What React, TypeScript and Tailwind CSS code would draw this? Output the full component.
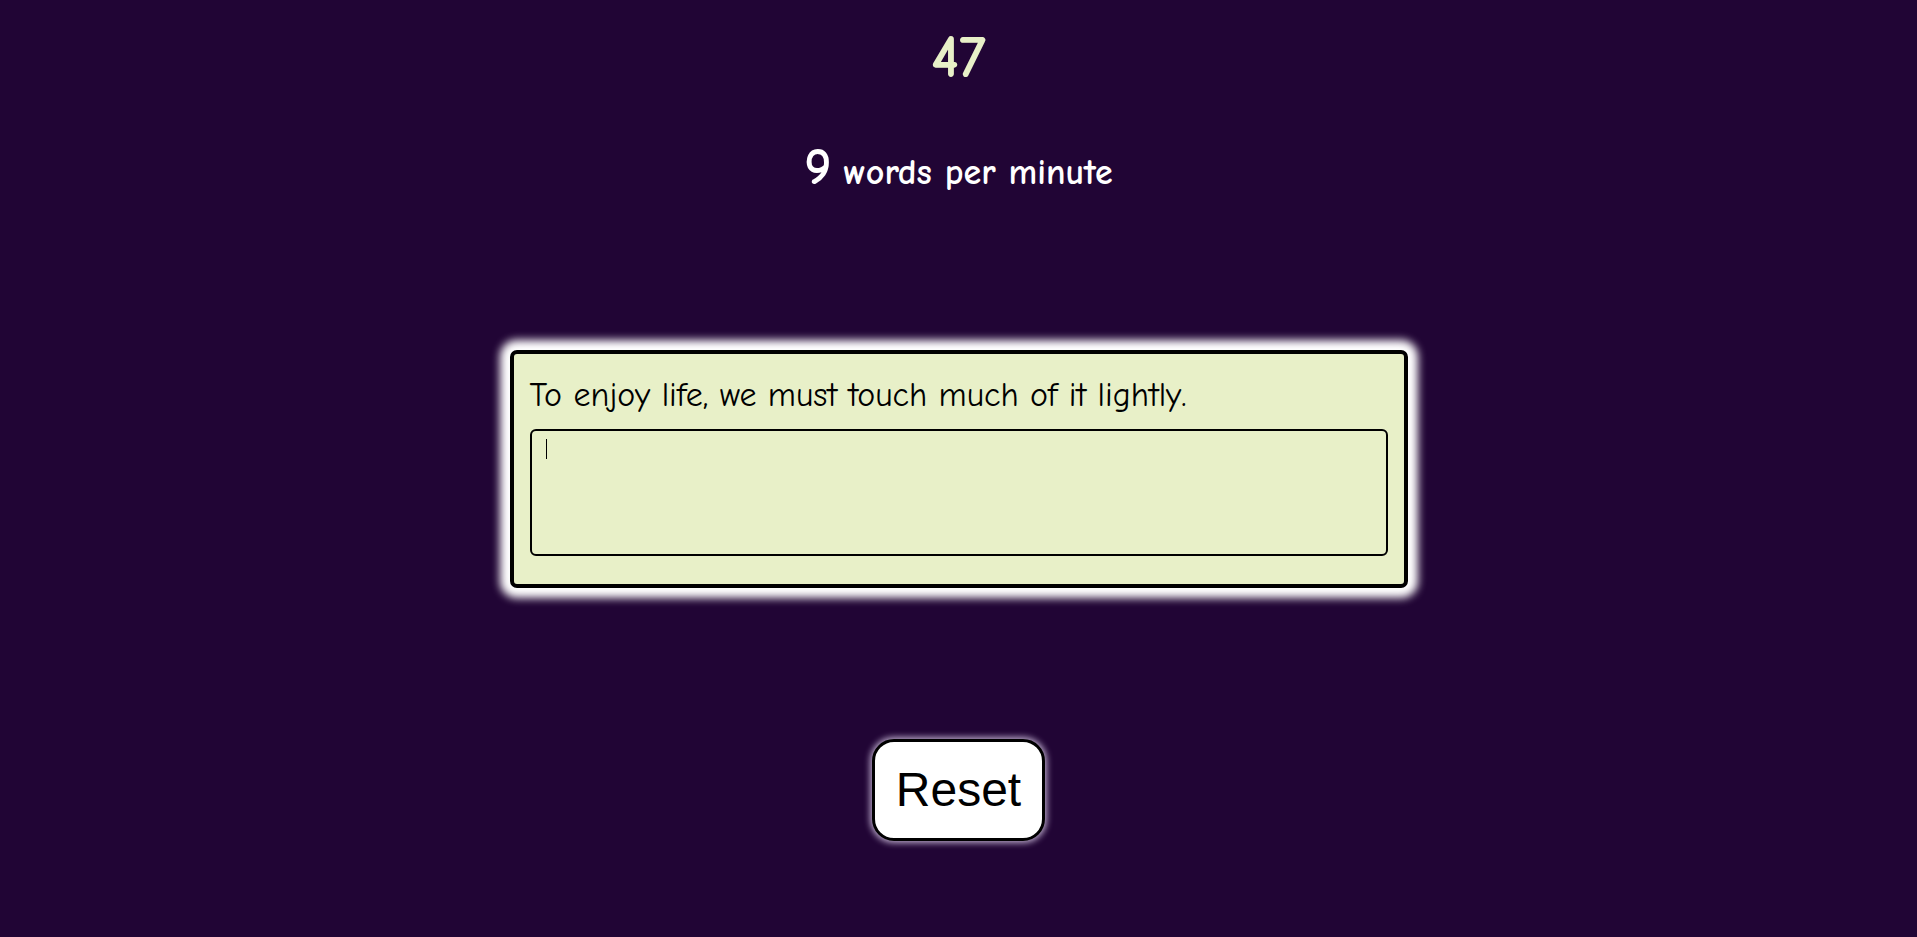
import { useState } from "react";

const comic = { fontFamily: '"Comic Sans MS", "Comic Neue", "Open Sans", sans-serif' };

export default function App() {
  const [typed, setTyped] = useState("");

  return (
    <div className="flex min-h-screen flex-col items-center bg-[#210535]" style={comic}>
      {/* timer */}
      <div className="mt-[26px] h-[64px] text-[60px] leading-[64px] font-bold text-[#e8f0c8]">47</div>

      {/* wpm */}
      <div className="mt-[52px] flex h-[50px] items-baseline gap-3 text-white">
        <span className="text-[52px] font-bold leading-[50px]">9</span>
        <span className="text-[36px] font-bold leading-[50px]">words per minute</span>
      </div>

      {/* quote card */}
      <div className="mt-[158px] w-[898px] rounded-[7px] border-4 border-black bg-[#e8f0c8] px-4 pt-[21px] pb-[28px] shadow-[0_0_8px_10px_#ffffff]">
        <p className="mb-[14px] text-[34px] leading-[40px] text-black">
          To enjoy life, we must touch much of it lightly.
        </p>
        <div className="relative">
          <textarea
            value={typed}
            onChange={(e) => setTyped(e.target.value)}
            className="block h-[127px] w-full resize-none rounded-[6px] border-2 border-black bg-transparent px-4 py-2 text-[24px] text-black outline-none"
            style={comic}
          />
          {typed === "" && (
            <span className="pointer-events-none absolute top-[10px] left-[16px] h-[20px] w-px bg-black" />
          )}
        </div>
      </div>

      {/* reset */}
      <button
        onClick={() => setTyped("")}
        className="mt-[151px] h-[102px] w-[173px] rounded-[22px] border-[3px] border-black bg-white text-[48px] text-black shadow-[0_0_6px_2px_#b9a8c8]"
        style={{ fontFamily: '"Liberation Sans", Arial, sans-serif' }}
      >
        Reset
      </button>
    </div>
  );
}
